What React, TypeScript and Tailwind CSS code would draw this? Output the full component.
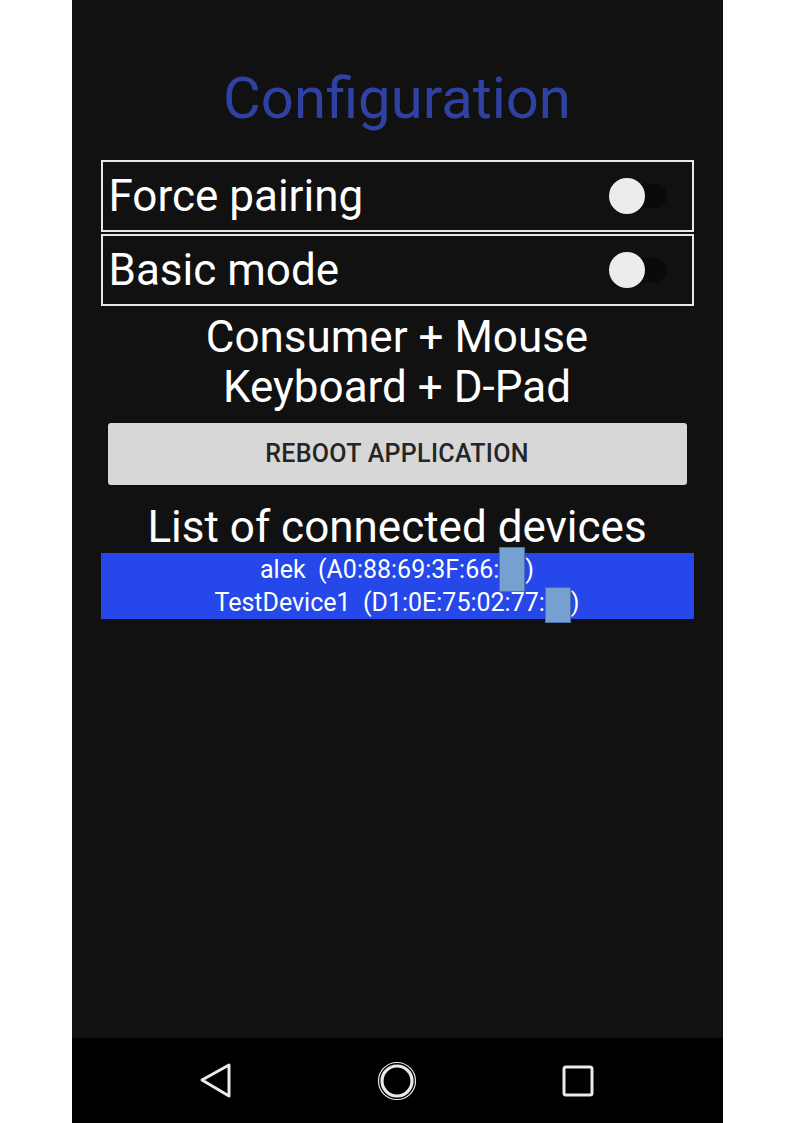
import React from 'react';

function Toggle() {
  return (
    <div className="relative w-[58px] h-[36px] flex items-center">
      <div className="absolute left-[4px] right-0 h-[24px] rounded-full bg-[#0a0a0a]" />
      <div className="absolute left-0 w-[36px] h-[36px] rounded-full bg-[#ececec]" />
    </div>
  );
}

function SettingRow({ label }: { label: string }) {
  return (
    <div className="h-[72px] border-2 border-[#e8e8e8] flex items-center justify-between pl-[6px] pr-[25px]">
      <span className="text-[44px] leading-none text-white">{label}</span>
      <Toggle />
    </div>
  );
}

function Redacted({ top, h }: { top: string; h: string }) {
  return (
    <span className="relative inline-block w-[26px] h-[1em] align-baseline">
      <span className={`absolute left-0 w-[26px] bg-[#76a0d0] border border-[#4a6fab] ${top} ${h}`} />
    </span>
  );
}

function NavBar() {
  return (
    <nav className="h-[85px] bg-black flex justify-center items-center">
      <div className="w-[181px] flex justify-center">
        <svg width="34" height="36" viewBox="0 0 34 36">
          <path d="M30 2 L3 17 L30 33 Z" fill="none" stroke="#ebebeb" strokeWidth="3" strokeLinejoin="round" />
        </svg>
      </div>
      <div className="w-[181px] flex justify-center">
        <svg width="40" height="40" viewBox="0 0 40 40">
          <circle cx="20" cy="20" r="18.5" fill="none" stroke="#ebebeb" strokeWidth="1.2" />
          <circle cx="20" cy="20" r="15" fill="none" stroke="#ebebeb" strokeWidth="3.2" />
        </svg>
      </div>
      <div className="w-[181px] flex justify-center">
        <svg width="32" height="32" viewBox="0 0 32 32">
          <rect x="2" y="2" width="28" height="28" rx="2" fill="none" stroke="#ebebeb" strokeWidth="3" />
        </svg>
      </div>
    </nav>
  );
}

export default function App() {
  return (
    <div className="min-h-screen bg-white" style={{ fontFamily: 'Roboto, "Liberation Sans", sans-serif' }}>
      <div className="mx-auto w-[651px] h-[1123px] flex flex-col bg-[#111111]">
        <main className="flex-1 px-[29px] pt-[66px]">
          <h1 className="text-center text-[58px] leading-[64px] text-[#2f42a3]">Configuration</h1>

          <div className="mt-[30px] flex flex-col gap-[2px]">
            <SettingRow label="Force pairing" />
            <SettingRow label="Basic mode" />
          </div>

          <div className="mt-[6px] text-center text-[44px] leading-[50px] text-white">
            <p>Consumer + Mouse</p>
            <p>Keyboard + D-Pad</p>
          </div>

          <button className="mt-[11px] mx-[7px] w-[579px] h-[62px] rounded-[3px] bg-[#d6d7d6] text-[#252525] text-[25px] font-medium tracking-[0.3px] shadow-sm">
            REBOOT APPLICATION
          </button>

          <h2 className="mt-[17px] text-center text-[44px] leading-[50px] text-white">List of connected devices</h2>

          <ul className="mt-[1px] bg-[#2647e9] text-white text-center text-[25px] leading-[33px]">
            <li>
              alek&nbsp; (A0:88:69:3F:66:<Redacted top="top-[-6px]" h="h-[45px]" />)
            </li>
            <li>
              TestDevice1&nbsp; (D1:0E:75:02:77:<Redacted top="top-[1px]" h="h-[36px]" />)
            </li>
          </ul>
        </main>
        <NavBar />
      </div>
    </div>
  );
}
